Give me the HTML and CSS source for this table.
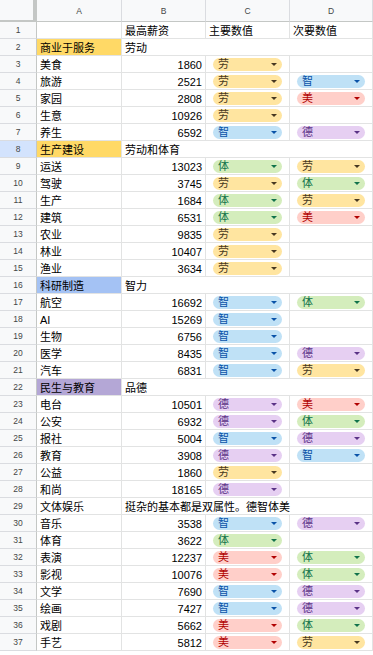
FILE: index.html
```html
<!DOCTYPE html>
<html lang="zh">
<head>
<meta charset="utf-8">
<title>Sheet</title>
<link rel="stylesheet" href="styles.css">
</head>
<body>
<div class="sheet">
  <div class="row head">
    <div class="corner"></div>
    <div class="colh">A</div>
    <div class="colh">B</div>
    <div class="colh">C</div>
    <div class="colh">D</div>
  </div>

  <div class="row"><div class="rh">1</div><div class="c"></div><div class="c">最高薪资</div><div class="c">主要数值</div><div class="c">次要数值</div></div>
  <div class="row"><div class="rh">2</div><div class="c sec-y">商业于服务</div><div class="c span">劳动</div></div>
  <div class="row"><div class="rh">3</div><div class="c">美食</div><div class="c num">1860</div><div class="c"><span class="chip y">劳</span></div><div class="c"></div></div>
  <div class="row"><div class="rh">4</div><div class="c">旅游</div><div class="c num">2521</div><div class="c"><span class="chip y">劳</span></div><div class="c"><span class="chip b">智</span></div></div>
  <div class="row"><div class="rh">5</div><div class="c">家园</div><div class="c num">2808</div><div class="c"><span class="chip y">劳</span></div><div class="c"><span class="chip r">美</span></div></div>
  <div class="row"><div class="rh">6</div><div class="c">生意</div><div class="c num">10926</div><div class="c"><span class="chip y">劳</span></div><div class="c"></div></div>
  <div class="row"><div class="rh">7</div><div class="c">养生</div><div class="c num">6592</div><div class="c"><span class="chip b">智</span></div><div class="c"><span class="chip p">德</span></div></div>
  <div class="row"><div class="rh sel">8</div><div class="c sec-y">生产建设</div><div class="c span">劳动和体育</div></div>
  <div class="row"><div class="rh">9</div><div class="c">运送</div><div class="c num">13023</div><div class="c"><span class="chip g">体</span></div><div class="c"><span class="chip y">劳</span></div></div>
  <div class="row"><div class="rh">10</div><div class="c">驾驶</div><div class="c num">3745</div><div class="c"><span class="chip y">劳</span></div><div class="c"><span class="chip g">体</span></div></div>
  <div class="row"><div class="rh">11</div><div class="c">生产</div><div class="c num">1684</div><div class="c"><span class="chip g">体</span></div><div class="c"><span class="chip y">劳</span></div></div>
  <div class="row"><div class="rh">12</div><div class="c">建筑</div><div class="c num">6531</div><div class="c"><span class="chip g">体</span></div><div class="c"><span class="chip r">美</span></div></div>
  <div class="row"><div class="rh">13</div><div class="c">农业</div><div class="c num">9835</div><div class="c"><span class="chip y">劳</span></div><div class="c"></div></div>
  <div class="row"><div class="rh">14</div><div class="c">林业</div><div class="c num">10407</div><div class="c"><span class="chip y">劳</span></div><div class="c"></div></div>
  <div class="row"><div class="rh">15</div><div class="c">渔业</div><div class="c num">3634</div><div class="c"><span class="chip y">劳</span></div><div class="c"></div></div>
  <div class="row"><div class="rh">16</div><div class="c sec-b">科研制造</div><div class="c span">智力</div></div>
  <div class="row"><div class="rh">17</div><div class="c">航空</div><div class="c num">16692</div><div class="c"><span class="chip b">智</span></div><div class="c"><span class="chip g">体</span></div></div>
  <div class="row"><div class="rh">18</div><div class="c">AI</div><div class="c num">15269</div><div class="c"><span class="chip b">智</span></div><div class="c"></div></div>
  <div class="row"><div class="rh">19</div><div class="c">生物</div><div class="c num">6756</div><div class="c"><span class="chip b">智</span></div><div class="c"></div></div>
  <div class="row"><div class="rh">20</div><div class="c">医学</div><div class="c num">8435</div><div class="c"><span class="chip b">智</span></div><div class="c"><span class="chip p">德</span></div></div>
  <div class="row"><div class="rh">21</div><div class="c">汽车</div><div class="c num">6831</div><div class="c"><span class="chip b">智</span></div><div class="c"><span class="chip y">劳</span></div></div>
  <div class="row"><div class="rh">22</div><div class="c sec-p">民生与教育</div><div class="c span">品德</div></div>
  <div class="row"><div class="rh">23</div><div class="c">电台</div><div class="c num">10501</div><div class="c"><span class="chip p">德</span></div><div class="c"><span class="chip r">美</span></div></div>
  <div class="row"><div class="rh">24</div><div class="c">公安</div><div class="c num">6932</div><div class="c"><span class="chip p">德</span></div><div class="c"><span class="chip g">体</span></div></div>
  <div class="row"><div class="rh">25</div><div class="c">报社</div><div class="c num">5004</div><div class="c"><span class="chip b">智</span></div><div class="c"><span class="chip p">德</span></div></div>
  <div class="row"><div class="rh">26</div><div class="c">教育</div><div class="c num">3908</div><div class="c"><span class="chip p">德</span></div><div class="c"><span class="chip b">智</span></div></div>
  <div class="row"><div class="rh">27</div><div class="c">公益</div><div class="c num">1860</div><div class="c"><span class="chip y">劳</span></div><div class="c"></div></div>
  <div class="row"><div class="rh">28</div><div class="c">和尚</div><div class="c num">18165</div><div class="c"><span class="chip p">德</span></div><div class="c"></div></div>
  <div class="row"><div class="rh">29</div><div class="c">文体娱乐</div><div class="c span">挺杂的基本都是双属性。德智体美</div></div>
  <div class="row"><div class="rh">30</div><div class="c">音乐</div><div class="c num">3538</div><div class="c"><span class="chip b">智</span></div><div class="c"><span class="chip p">德</span></div></div>
  <div class="row"><div class="rh">31</div><div class="c">体育</div><div class="c num">3622</div><div class="c"><span class="chip g">体</span></div><div class="c"></div></div>
  <div class="row"><div class="rh">32</div><div class="c">表演</div><div class="c num">12237</div><div class="c"><span class="chip r">美</span></div><div class="c"><span class="chip g">体</span></div></div>
  <div class="row"><div class="rh">33</div><div class="c">影视</div><div class="c num">10076</div><div class="c"><span class="chip r">美</span></div><div class="c"><span class="chip g">体</span></div></div>
  <div class="row"><div class="rh">34</div><div class="c">文学</div><div class="c num">7690</div><div class="c"><span class="chip b">智</span></div><div class="c"><span class="chip p">德</span></div></div>
  <div class="row"><div class="rh">35</div><div class="c">绘画</div><div class="c num">7427</div><div class="c"><span class="chip b">智</span></div><div class="c"><span class="chip p">德</span></div></div>
  <div class="row"><div class="rh">36</div><div class="c">戏剧</div><div class="c num">5662</div><div class="c"><span class="chip r">美</span></div><div class="c"><span class="chip g">体</span></div></div>
  <div class="row"><div class="rh">37</div><div class="c">手艺</div><div class="c num">5812</div><div class="c"><span class="chip r">美</span></div><div class="c"><span class="chip y">劳</span></div></div>
</div>
</body>
</html>
```

FILE: styles.css
```css
* { box-sizing: border-box; }
html, body { margin: 0; padding: 0; background: #fff; }
body {
  font-family: "Liberation Sans", Arial, "Noto Sans CJK SC", sans-serif;
  font-size: 11px;
  color: #000;
  overflow: hidden;
}
.sheet { width: 373px; }
.row {
  display: grid;
  grid-template-columns: 37px 85px 84px 84px 83px;
  height: 17px;
}
.row.head { height: 22px; }
.corner {
  background: #f8f9fa;
  border-right: 4px solid #c4c7c5;
  border-bottom: 2px solid #c4c7c5;
}
.colh {
  background: #f8f9fa;
  border-right: 1px solid #dadce0;
  border-bottom: 1px solid #c4c7c5;
  color: #444746;
  font-size: 8.5px;
  display: flex;
  align-items: center;
  justify-content: center;
}
.rh {
  background: #f8f9fa;
  border-right: 1px solid #c4c7c5;
  border-bottom: 1px solid #dadce0;
  color: #444746;
  font-size: 8.5px;
  display: flex;
  align-items: center;
  justify-content: center;
}
.rh.sel { background: #d3e3fd; }
.c {
  border-right: 1px solid #e2e3e3;
  border-bottom: 1px solid #e2e3e3;
  padding: 0 3px;
  display: flex;
  align-items: flex-end;
  line-height: 13px;
  white-space: nowrap;
  overflow: visible;
  min-width: 0;
}
.c.num { justify-content: flex-end; }
.c.span { grid-column: span 3; }
.sec-y { background: #ffd966; }
.sec-b { background: #a4c2f4; }
.sec-p { background: #b4a7d6; }

.c:has(.chip) { padding: 0 7px; align-items: center; }
.chip {
  flex: 1;
  height: 13px;
  margin-top: 1px;
  border-radius: 7px;
  padding: 0 5px;
  display: flex;
  align-items: center;
  justify-content: space-between;
  line-height: 13px;
  font-size: 11px;
}
.chip::after {
  content: "";
  width: 0;
  height: 0;
  border-left: 3px solid transparent;
  border-right: 3px solid transparent;
  border-top: 3px solid currentColor;
}
.chip.y { background: #ffe5a0; color: #473821; }
.chip.b { background: #bfe1f6; color: #0a53a8; }
.chip.r { background: #ffcfc9; color: #b10202; }
.chip.g { background: #d4edbc; color: #11734b; }
.chip.p { background: #e6cff2; color: #5a3286; }
```
